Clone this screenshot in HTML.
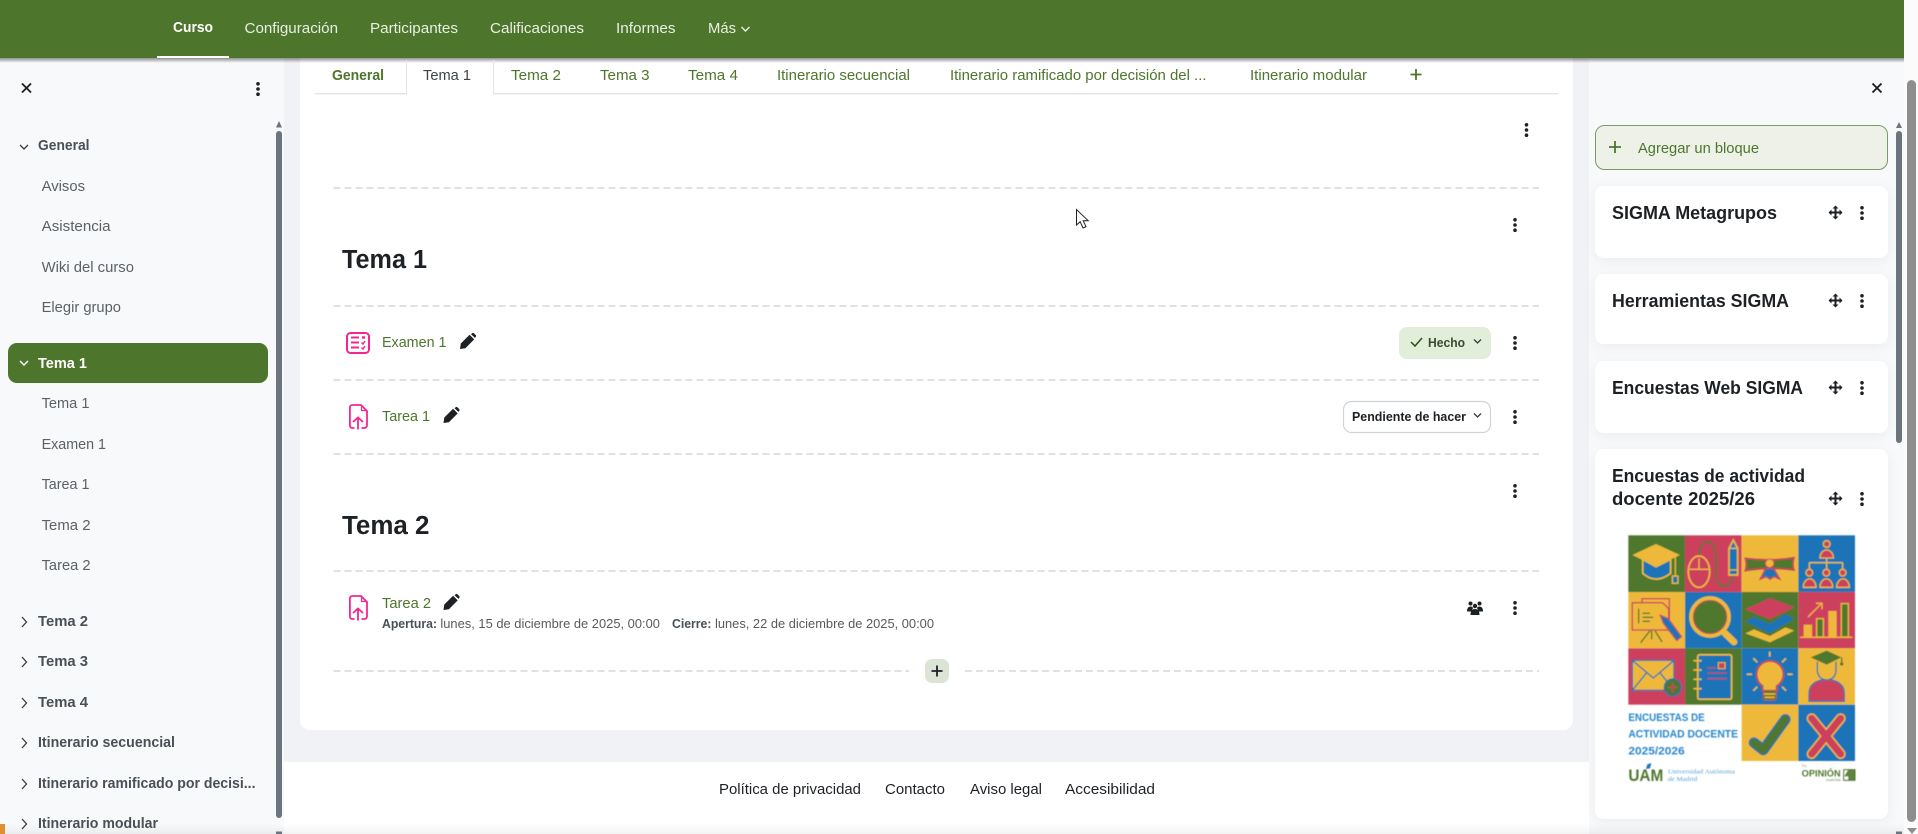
<!DOCTYPE html>
<html lang="es">
<head>
<meta charset="utf-8">
<title>Curso: Tema 1</title>
<style>
html,body{margin:0;padding:0;width:1918px;height:834px;overflow:hidden;background:#fbfbfb}
svg{display:block}
text{font-family:"Liberation Sans",sans-serif;font-size:15px;white-space:pre}
.nav{fill:#e9efe4}
.b{font-weight:700}
.tab{fill:#4d762c}
.side{fill:#5b6166}
.sideb{fill:#495057;font-weight:700}
.link{fill:#4d762c}
.h{font-size:25.5px;font-weight:700;fill:#1d2125}
.bt{font-size:18px;font-weight:700;fill:#1d2125}
.foot{fill:#1d2125}
.sm{font-size:13px;fill:#555b60}
.smb{font-size:13px;font-weight:700;fill:#495057}
.btn{font-size:13px;font-weight:700;fill:#1d2125}
.dash{stroke:#dee2e6;stroke-width:2;stroke-dasharray:7 4;fill:none}
.chev{fill:none;stroke:#343a40;stroke-width:1.3}
.pink{fill:none;stroke:#f5278f;stroke-width:2}
</style>
</head>
<body>
<svg xmlns="http://www.w3.org/2000/svg" width="1918" height="834" viewBox="0 0 1918 834">
<defs>
<linearGradient id="hs" x1="0" y1="0" x2="0" y2="1"><stop offset="0" stop-color="#000" stop-opacity=".42"/><stop offset="1" stop-color="#000" stop-opacity="0"/></linearGradient>
<linearGradient id="bf" x1="0" y1="0" x2="0" y2="1"><stop offset="0" stop-color="#000" stop-opacity="0"/><stop offset="1" stop-color="#000" stop-opacity=".05"/></linearGradient>
<filter id="cs" x="-10%" y="-30%" width="120%" height="160%"><feDropShadow dx="0" dy="3" stdDeviation="6" flood-color="#000" flood-opacity=".05"/></filter>
<filter id="bl"><feGaussianBlur stdDeviation="1.5"/></filter>
<g id="keb"><circle cx="0" cy="-5.2" r="1.8"/><circle cx="0" cy="0" r="1.8"/><circle cx="0" cy="5.2" r="1.8"/></g>
<g id="pen"><path d="M.8 10.500L9.600 1.800L14.200 6.400L5.400 15.200L0 16Z"/><path d="M11 1.200L12 .4a1.400 1.400 0 0 1 2 0L15.600 2a1.400 1.400 0 0 1 0 2L15 4.900Z"/></g>
<g id="mov"><path d="M0 -7L-3 -4H-1V-1H-4V-3L-7 0L-4 3V1H-1V4H-3L0 7L3 4H1V1H4V3L7 0L4 -3V-1H1V-4H3Z"/></g>
<g id="up" fill="none" stroke="#f5278f" stroke-width="1.800"><path d="M12.500 24H15Q18 24 18 21V7L12 1H3.500Q.9 1 .9 4V21Q.9 24 3.500 24H5.500"/><path d="M12.500 1V6.500H18" stroke-width="1.200"/><path d="M9 25.500V13.500M4 18L9 13.500L14 18"/></g>
</defs>

<!-- surfaces -->
<rect width="1904" height="834" fill="#f1f2f6"/>
<rect x="1904" width="14" height="834" fill="#fbfbfb"/>
<rect x="0" y="58" width="284" height="776" fill="#f8f9fa"/>
<rect x="1589" y="58" width="315" height="776" fill="#f8f9fa"/>
<path d="M300 58H1573V720a10 10 0 0 1-10 10H310a10 10 0 0 1-10-10Z" fill="#fff"/>
<rect x="284" y="762" width="1305" height="72" fill="#fff"/>
<rect x="0" y="824" width="1904" height="10" fill="url(#bf)"/>

<!-- header -->
<rect width="1904" height="58" fill="#4d762c"/>
<rect y="58" width="1904" height="5" fill="url(#hs)"/>
<rect x="157" y="56" width="72" height="2" fill="#fff"/>
<text x="173" y="32" textLength="40" lengthAdjust="spacingAndGlyphs" class="b" fill="#fff">Curso</text>
<text x="244.500" y="33" textLength="93.500" lengthAdjust="spacingAndGlyphs" class="nav">Configuración</text>
<text x="370" y="33" textLength="88" lengthAdjust="spacingAndGlyphs" class="nav">Participantes</text>
<text x="490" y="33" textLength="94" lengthAdjust="spacingAndGlyphs" class="nav">Calificaciones</text>
<text x="616" y="33" textLength="59.500" lengthAdjust="spacingAndGlyphs" class="nav">Informes</text>
<text x="708" y="33" textLength="28" lengthAdjust="spacingAndGlyphs" class="nav">Más</text>
<path d="M741.500 27l4 4l4-4" fill="none" stroke="#e9efe4" stroke-width="1.400"/>

<!-- tabs -->
<rect x="315" y="93" width="92" height="1.500" fill="#e3e5e8"/>
<rect x="493" y="93" width="1065" height="1.500" fill="#e3e5e8"/>
<rect x="406" y="60" width="1" height="34.500" fill="#e3e5e8"/>
<rect x="493" y="60" width="1" height="34.500" fill="#e3e5e8"/>
<text x="332" y="80" textLength="52" lengthAdjust="spacingAndGlyphs" class="tab b">General</text>
<text x="423" y="80" textLength="48" lengthAdjust="spacingAndGlyphs" fill="#3e4549">Tema 1</text>
<text x="511" y="80" textLength="50" lengthAdjust="spacingAndGlyphs" class="tab">Tema 2</text>
<text x="600" y="80" textLength="49.500" lengthAdjust="spacingAndGlyphs" class="tab">Tema 3</text>
<text x="688" y="80" textLength="50" lengthAdjust="spacingAndGlyphs" class="tab">Tema 4</text>
<text x="777" y="80" textLength="133" lengthAdjust="spacingAndGlyphs" class="tab">Itinerario secuencial</text>
<text x="950" y="80" textLength="256.500" lengthAdjust="spacingAndGlyphs" class="tab">Itinerario ramificado por decisión del ...</text>
<text x="1250" y="80" textLength="117" lengthAdjust="spacingAndGlyphs" class="tab">Itinerario modular</text>
<path d="M1416 69V80M1410.500 74.500H1421.500" stroke="#4d762c" stroke-width="1.800" fill="none"/>

<!-- left drawer -->
<path d="M22 83.500L31 92.500M31 83.500L22 92.500" stroke="#1d2125" stroke-width="1.900" fill="none"/>
<use href="#keb" x="258" y="89" fill="#1d2125"/>
<path d="M276 128.500L279 122L282 128.500Z" fill="#6c757d" transform="translate(0,-1)"/>
<rect x="276" y="131" width="6" height="687" rx="3" fill="#6c757d"/>
<rect x="276" y="831.500" width="6" height="2.500" fill="#6c757d"/>
<rect x="0" y="824" width="5" height="10" fill="#e0912f"/>

<path class="chev" d="M20 145l4 4l4-4"/>
<text x="38" y="150" textLength="51.500" lengthAdjust="spacingAndGlyphs" class="sideb">General</text>
<text x="41.600" y="191" textLength="43.400" lengthAdjust="spacingAndGlyphs" class="side">Avisos</text>
<text x="41.600" y="231" textLength="69" lengthAdjust="spacingAndGlyphs" class="side">Asistencia</text>
<text x="41.600" y="272" textLength="92.400" lengthAdjust="spacingAndGlyphs" class="side">Wiki del curso</text>
<text x="41.600" y="312" textLength="79.400" lengthAdjust="spacingAndGlyphs" class="side">Elegir grupo</text>

<rect x="8" y="343" width="260" height="40" rx="9" fill="#4d762c"/>
<path d="M20 361l4 4l4-4" fill="none" stroke="#fff" stroke-width="1.500"/>
<text x="38" y="368" textLength="49" lengthAdjust="spacingAndGlyphs" class="b" fill="#fff">Tema 1</text>
<text x="41.600" y="408" textLength="47.900" lengthAdjust="spacingAndGlyphs" class="side">Tema 1</text>
<text x="41.600" y="449" textLength="64.400" lengthAdjust="spacingAndGlyphs" class="side">Examen 1</text>
<text x="41.600" y="489" textLength="47.900" lengthAdjust="spacingAndGlyphs" class="side">Tarea 1</text>
<text x="41.600" y="530" textLength="48.900" lengthAdjust="spacingAndGlyphs" class="side">Tema 2</text>
<text x="41.600" y="570" textLength="48.900" lengthAdjust="spacingAndGlyphs" class="side">Tarea 2</text>

<path class="chev" d="M22 617l4.500 5l-4.500 5"/>
<text x="38" y="626" textLength="50" lengthAdjust="spacingAndGlyphs" class="sideb">Tema 2</text>
<path class="chev" d="M22 657l4.500 5l-4.500 5"/>
<text x="38" y="666" textLength="50" lengthAdjust="spacingAndGlyphs" class="sideb">Tema 3</text>
<path class="chev" d="M22 698l4.500 5l-4.500 5"/>
<text x="38" y="707" textLength="50" lengthAdjust="spacingAndGlyphs" class="sideb">Tema 4</text>
<path class="chev" d="M22 738l4.500 5l-4.500 5"/>
<text x="38" y="747" textLength="137" lengthAdjust="spacingAndGlyphs" class="sideb">Itinerario secuencial</text>
<path class="chev" d="M22 779l4.500 5l-4.500 5"/>
<text x="38" y="788" textLength="217.500" lengthAdjust="spacingAndGlyphs" class="sideb">Itinerario ramificado por decisi...</text>
<path class="chev" d="M22 819l4.500 5l-4.500 5"/>
<text x="38" y="828" textLength="120" lengthAdjust="spacingAndGlyphs" class="sideb">Itinerario modular</text>

<!-- main -->
<use href="#keb" x="1526.500" y="130" fill="#1d2125" />
<path class="dash" d="M333.500 188H1539"/>
<use href="#keb" x="1515" y="225" fill="#1d2125"/>
<text x="342" y="268" textLength="85" lengthAdjust="spacingAndGlyphs" class="h">Tema 1</text>
<path class="dash" d="M333.500 306H1539"/>

<rect x="347" y="333" width="22" height="20" rx="3.500" class="pink"/>
<path d="M351 337.500H359M351 342.500H359M351 347.500H359" stroke="#f5278f" stroke-width="2"/>
<path d="M362 337.500h3" stroke="#f5278f" stroke-width="2.500" fill="none"/>
<path d="M361.500 342.500l1.500 1.500l2-3M361.500 347.500l1.500 1.500l2-3" stroke="#f5278f" stroke-width="1.400" fill="none"/>
<text x="382" y="347" textLength="64.500" lengthAdjust="spacingAndGlyphs" class="link">Examen 1</text>
<use href="#pen" x="460" y="333" fill="#1d2125"/>
<rect x="1399" y="327" width="92" height="32" rx="8" fill="#e0eeda"/>
<path d="M1411 342l4 4l7-8" fill="none" stroke="#2d5016" stroke-width="1.500"/>
<text x="1428" y="347" textLength="37" lengthAdjust="spacingAndGlyphs" class="btn" style="fill:#3a4a30">Hecho</text>
<path class="chev" d="M1474 339.500l3.500 3.500l3.500-3.500"/>
<use href="#keb" x="1515" y="343" fill="#1d2125"/>
<path class="dash" d="M333.500 380H1539"/>

<use href="#up" x="349" y="404"/>
<text x="382" y="421" textLength="48" lengthAdjust="spacingAndGlyphs" class="link">Tarea 1</text>
<use href="#pen" x="443.500" y="407" fill="#1d2125"/>
<rect x="1343.500" y="401.500" width="147" height="31" rx="8" fill="#fff" stroke="#ced4da" stroke-width="1.200"/>
<text x="1352" y="421" textLength="114" lengthAdjust="spacingAndGlyphs" class="btn">Pendiente de hacer</text>
<path class="chev" d="M1474 413.500l3.500 3.500l3.500-3.500"/>
<use href="#keb" x="1515" y="417" fill="#1d2125"/>
<path class="dash" d="M333.500 454H1539"/>

<use href="#keb" x="1515" y="491" fill="#1d2125"/>
<text x="342" y="534" textLength="87.500" lengthAdjust="spacingAndGlyphs" class="h">Tema 2</text>
<path class="dash" d="M333.500 571H1539"/>

<use href="#up" x="349" y="595"/>
<text x="382" y="608" textLength="49" lengthAdjust="spacingAndGlyphs" class="link">Tarea 2</text>
<use href="#pen" x="443.500" y="594" fill="#1d2125"/>
<text x="382" y="628" textLength="55" lengthAdjust="spacingAndGlyphs" class="smb">Apertura:</text>
<text x="440.400" y="628" textLength="219.600" lengthAdjust="spacingAndGlyphs" class="sm">lunes, 15 de diciembre de 2025, 00:00</text>
<text x="672" y="628" textLength="39.400" lengthAdjust="spacingAndGlyphs" class="smb">Cierre:</text>
<text x="715" y="628" textLength="219" lengthAdjust="spacingAndGlyphs" class="sm">lunes, 22 de diciembre de 2025, 00:00</text>
<g fill="#1d2125"><circle cx="1470.500" cy="603.500" r="2"/><circle cx="1479.500" cy="603.500" r="2"/><path d="M1467 611.500q0-5 3.500-5q2 0 2.500 1.500l-1.500 3.500Z"/><path d="M1483 611.500q0-5-3.500-5q-2 0-2.500 1.500l1.500 3.500Z"/><circle cx="1475" cy="606" r="2.200"/><path d="M1470.500 615q0-6 4.500-6t4.500 6Z"/></g>
<use href="#keb" x="1515" y="608" fill="#1d2125"/>
<path class="dash" d="M333.500 671H909M965 671H1539"/>
<rect x="925" y="659" width="24" height="24" rx="7" fill="#dbe4d5"/>
<path d="M937 665.500V676.500M931.500 671H942.500" stroke="#1d2125" stroke-width="1.800"/>

<!-- cursor -->
<path d="M1076.500 209.500V225l3.700-3.300l2.800 6.300l3-1.300l-2.800-6h5Z" fill="#fff" stroke="#1d2125" stroke-width="1"/>

<!-- footer -->
<text x="719" y="794" textLength="142" lengthAdjust="spacingAndGlyphs" class="foot">Política de privacidad</text>
<text x="885" y="794" textLength="60" lengthAdjust="spacingAndGlyphs" class="foot">Contacto</text>
<text x="970" y="794" textLength="72" lengthAdjust="spacingAndGlyphs" class="foot">Aviso legal</text>
<text x="1065" y="794" textLength="90" lengthAdjust="spacingAndGlyphs" class="foot">Accesibilidad</text>

<!-- right drawer -->
<path d="M1872.500 83.500L1881.500 92.500M1881.500 83.500L1872.500 92.500" stroke="#1d2125" stroke-width="1.900" fill="none"/>
<path d="M1896 128L1899 122L1902 128Z" fill="#6c757d"/>
<rect x="1896" y="131" width="6" height="312" rx="3" fill="#6c757d"/>
<rect x="1896" y="831.500" width="6" height="2.500" fill="#6c757d"/>
<rect x="1907" y="80" width="9" height="742" rx="4.500" fill="#8e8e8e"/>
<path d="M1907 828H1917L1912 834Z" fill="#8e8e8e"/>

<rect x="1595.500" y="125.500" width="292" height="44" rx="9" fill="#edf1e8" stroke="#7d9a66" stroke-width="1"/>
<path d="M1615 141V153M1609 147H1621" stroke="#4d762c" stroke-width="1.800"/>
<text x="1638" y="153" textLength="121" lengthAdjust="spacingAndGlyphs" class="link">Agregar un bloque</text>

<g filter="url(#cs)" fill="#fff">
<rect x="1595" y="186" width="293" height="72" rx="9"/>
<rect x="1595" y="274" width="293" height="70" rx="9"/>
<rect x="1595" y="361" width="293" height="72" rx="9"/>
<rect x="1595" y="449" width="293" height="370" rx="9"/>
</g>
<text x="1612" y="219" textLength="165" lengthAdjust="spacingAndGlyphs" class="bt">SIGMA Metagrupos</text>
<use href="#mov" x="1835.500" y="212.500" fill="#1d2125"/><use href="#keb" x="1862" y="213" fill="#1d2125"/>
<text x="1612" y="307" textLength="177" lengthAdjust="spacingAndGlyphs" class="bt">Herramientas SIGMA</text>
<use href="#mov" x="1835.500" y="300.500" fill="#1d2125"/><use href="#keb" x="1862" y="301" fill="#1d2125"/>
<text x="1612" y="394" textLength="191" lengthAdjust="spacingAndGlyphs" class="bt">Encuestas Web SIGMA</text>
<use href="#mov" x="1835.500" y="387.500" fill="#1d2125"/><use href="#keb" x="1862" y="388" fill="#1d2125"/>
<text x="1612" y="482" textLength="193" lengthAdjust="spacingAndGlyphs" class="bt">Encuestas de actividad</text>
<text x="1612" y="505" textLength="143" lengthAdjust="spacingAndGlyphs" class="bt">docente 2025/26</text>
<use href="#mov" x="1835.500" y="498.500" fill="#1d2125"/><use href="#keb" x="1862" y="499" fill="#1d2125"/>

<!-- poster -->
<g transform="translate(1600,520) scale(.33333)" filter="url(#bl)">
<g>
<rect x="85" y="46" width="170" height="170" fill="#4f772d"/><rect x="255" y="46" width="170" height="170" fill="#cc3f5d"/><rect x="425" y="46" width="170" height="170" fill="#eeb93a"/><rect x="595" y="46" width="170" height="170" fill="#1a73b8"/>
<rect x="85" y="216" width="170" height="169" fill="#eeb93a"/><rect x="255" y="216" width="170" height="169" fill="#1a73b8"/><rect x="425" y="216" width="170" height="169" fill="#4f772d"/><rect x="595" y="216" width="170" height="169" fill="#cc3f5d"/>
<rect x="85" y="385" width="170" height="169" fill="#cc3f5d"/><rect x="255" y="385" width="170" height="169" fill="#4f772d"/><rect x="425" y="385" width="170" height="169" fill="#1a73b8"/><rect x="595" y="385" width="170" height="169" fill="#eeb93a"/>
<rect x="425" y="554" width="170" height="169" fill="#eeb93a"/><rect x="595" y="554" width="170" height="169" fill="#1a73b8"/>
</g>
<!-- cap -->
<path d="M128 118V160Q168 195 212 160V118L168 140Z" fill="#1a73b8" stroke="#eeb93a" stroke-width="5"/>
<path d="M97 105L168 72L240 105L168 140Z" fill="#eeb93a"/>
<path d="M226 110V168" stroke="#eeb93a" stroke-width="4"/><rect x="217" y="168" width="17" height="22" fill="#1a73b8" stroke="#eeb93a" stroke-width="4"/>
<!-- mouse -->
<path d="M297 108C297 50 348 55 348 105V165C350 208 392 208 398 168" fill="none" stroke="#4f772d" stroke-width="5"/>
<ellipse cx="297" cy="155" rx="32" ry="47" fill="#cc3f5d" stroke="#eeb93a" stroke-width="5"/>
<path d="M265 148H329M297 115V148" stroke="#eeb93a" stroke-width="4"/>
<path d="M387 85L400 60L413 85V165H387Z" fill="#1a73b8" stroke="#eeb93a" stroke-width="5"/><path d="M387 85H413M387 150H413" stroke="#eeb93a" stroke-width="4"/>
<!-- diploma -->
<path d="M436 115Q510 125 582 113Q576 133 582 150Q510 140 436 152Q442 133 436 115Z" fill="#4f772d" stroke="#cc3f5d" stroke-width="5"/>
<path d="M497 145L480 178L499 170L510 178L522 170L540 178L521 145Z" fill="#1a73b8" stroke="#cc3f5d" stroke-width="4"/>
<circle cx="509" cy="130" r="13" fill="#eeb93a" stroke="#cc3f5d" stroke-width="3"/>
<!-- org chart -->
<g stroke="#eeb93a" stroke-width="4"><path d="M680 112V148M628 128H728M628 128V148M728 128V148" fill="none"/>
<g fill="#cc3f5d"><circle cx="680" cy="72" r="10"/><path d="M660 114a20 24 0 0 1 40 0Z"/><circle cx="628" cy="158" r="10"/><path d="M610 202a18 24 0 0 1 38 0Z"/><circle cx="679" cy="158" r="10"/><path d="M660 202a18 24 0 0 1 38 0Z"/><circle cx="728" cy="158" r="10"/><path d="M710 202a18 24 0 0 1 38 0Z"/></g></g>
<!-- presentation -->
<rect x="126" y="236" width="82" height="80" fill="none" stroke="#cc3f5d" stroke-width="4"/>
<path d="M97 248H188L206 266V330H97Z" fill="#eeb93a" stroke="#cc3f5d" stroke-width="4"/>
<path d="M116 266V310M128 280H150M128 292H160M128 304H150" stroke="#4f772d" stroke-width="4"/>
<path d="M150 332L122 368M155 332V358M165 332L186 366" stroke="#4f772d" stroke-width="4"/>
<path d="M180 285L205 296L245 350L230 362L190 310Z" fill="#1a73b8" stroke="#cc3f5d" stroke-width="3"/>
<!-- magnifier -->
<path d="M375 340L402 366" stroke="#eeb93a" stroke-width="20" stroke-linecap="round"/>
<circle cx="330" cy="291" r="56" fill="#4f772d" stroke="#eeb93a" stroke-width="13"/><circle cx="330" cy="291" r="50" fill="none" stroke="#cc3f5d" stroke-width="3"/>
<!-- layers -->
<path d="M436 340L462 328L510 348L556 322L583 332L510 367Z" fill="#eeb93a"/>
<path d="M436 304L462 291L510 312L556 283L583 295L510 341Z" fill="#1a73b8"/>
<path d="M435 268L510 234L583 262L510 298Z" fill="#cc3f5d"/>
<!-- bars -->
<g stroke="#eeb93a" stroke-width="4"><path d="M600 352H757" fill="none"/><rect x="613" y="316" width="21" height="35" fill="#eeb93a"/><rect x="650" y="296" width="20" height="55" fill="#4f772d"/><rect x="687" y="275" width="21" height="76" fill="#eeb93a"/><rect x="724" y="251" width="21" height="100" fill="#4f772d"/><path d="M624 291L665 250M648 250H666V268" fill="none"/></g>
<!-- envelope -->
<rect x="97" y="421" width="125" height="90" fill="#eeb93a" stroke="#1a73b8" stroke-width="4"/>
<path d="M97 421L160 474L222 421M97 511L140 458M222 511L180 458" fill="none" stroke="#1a73b8" stroke-width="4"/>
<circle cx="218" cy="502" r="25" fill="#4f772d" stroke="#1a73b8" stroke-width="4"/><path d="M218 488V516M204 502H232" stroke="#cc3f5d" stroke-width="4"/>
<!-- notebook -->
<rect x="293" y="404" width="102" height="134" rx="6" fill="#1a73b8" stroke="#eeb93a" stroke-width="5"/>
<path d="M280 422H305M280 450H305M280 478H305M280 506H305" stroke="#eeb93a" stroke-width="5"/>
<rect x="355" y="428" width="20" height="18" fill="#cc3f5d" stroke="#eeb93a" stroke-width="3"/>
<path d="M322 444H348M322 459H380M322 476H380" stroke="#cc3f5d" stroke-width="4"/>
<!-- bulb -->
<path d="M488 498Q470 485 470 463a40 40 0 0 1 80 0Q550 485 530 498V512H488Z" fill="#eeb93a" stroke="#cc3f5d" stroke-width="5"/>
<rect x="490" y="512" width="38" height="28" rx="5" fill="#4f772d" stroke="#cc3f5d" stroke-width="3"/><path d="M492 522H526M494 532H524" stroke="#eeb93a" stroke-width="5"/>
<path d="M509 395V410M460 415L472 427M558 415L546 427M440 463H456M562 463H578M460 512L472 500M558 512L546 500" stroke="#eeb93a" stroke-width="5"/>
<!-- person -->
<path d="M627 544V522Q627 482 680 478Q733 482 733 522V544Z" fill="#cc3f5d" stroke="#1a73b8" stroke-width="4"/>
<path d="M652 425V452Q655 478 680 480Q706 478 708 452V425" fill="#eeb93a" stroke="#1a73b8" stroke-width="4"/>
<path d="M632 412L680 392L724 412L680 434Z" fill="#4f772d"/><path d="M725 412V430" stroke="#4f772d" stroke-width="4"/><circle cx="725" cy="432" r="5" fill="#4f772d"/>
<!-- check / x -->
<path d="M462 668L490 690L556 598" fill="none" stroke="#1a73b8" stroke-width="32" stroke-linecap="round" stroke-linejoin="round"/>
<path d="M462 668L490 690L556 598" fill="none" stroke="#4f772d" stroke-width="23" stroke-linecap="round" stroke-linejoin="round"/>
<path d="M635 595L722 702M722 595L635 702" fill="none" stroke="#eeb93a" stroke-width="30" stroke-linecap="round"/>
<path d="M635 595L722 702M722 595L635 702" fill="none" stroke="#cc3f5d" stroke-width="21" stroke-linecap="round"/>
<!-- poster text -->
<text x="85" y="603" textLength="229" lengthAdjust="spacingAndGlyphs" style="font-size:32px;font-weight:700;fill:#2586cc">ENCUESTAS DE</text>
<text x="85" y="653" textLength="329" lengthAdjust="spacingAndGlyphs" style="font-size:32px;font-weight:700;fill:#2586cc">ACTIVIDAD DOCENTE</text>
<text x="85" y="704" textLength="169" lengthAdjust="spacingAndGlyphs" style="font-size:32px;font-weight:700;fill:#2586cc">2025/2026</text>
<text x="85" y="783" textLength="105" lengthAdjust="spacingAndGlyphs" style="font-size:50px;font-weight:700;fill:#4f772d">UAM</text>
<path d="M138 747L142 733L154 729L150 745Z" fill="#1a73b8"/>
<text x="204" y="761" textLength="201" lengthAdjust="spacingAndGlyphs" style="font-size:19px;font-family:'Liberation Serif',serif;fill:#5aa3d8">Universidad Autónoma</text>
<text x="204" y="783" textLength="88" lengthAdjust="spacingAndGlyphs" style="font-size:19px;font-family:'Liberation Serif',serif;fill:#5aa3d8">de Madrid</text>
<text x="605" y="741" style="font-size:12px;fill:#6d8f50">Tu</text>
<text x="605" y="770" textLength="117" lengthAdjust="spacingAndGlyphs" style="font-size:28px;font-weight:700;fill:#4f772d">OPINIÓN</text>
<text x="678" y="783" textLength="44" lengthAdjust="spacingAndGlyphs" style="font-size:12px;fill:#6d8f50">cuenta</text>
<rect x="731" y="749" width="34" height="32" fill="none" stroke="#4f772d" stroke-width="3"/><path d="M745 749H765V781H745V769H733Z" fill="#4f772d" transform="translate(0,0)" opacity=".9"/>
</g>
</svg>
</body>
</html>
